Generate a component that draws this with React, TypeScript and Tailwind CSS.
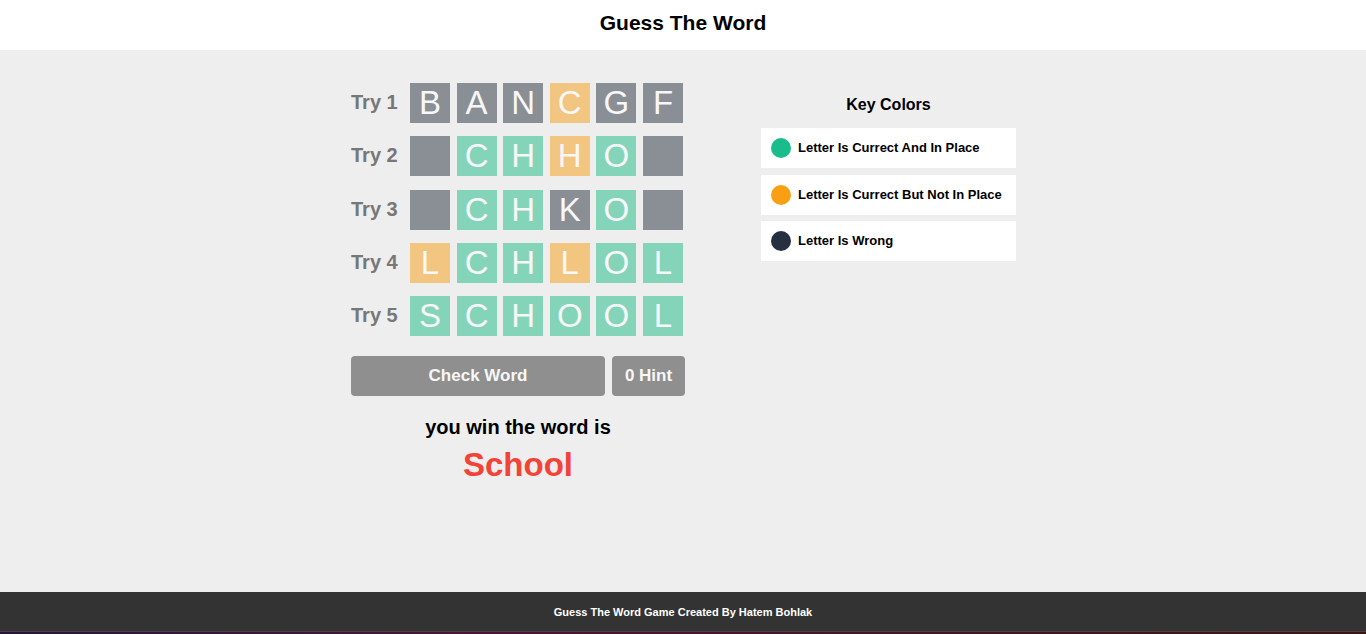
type Mark = "wrong" | "near" | "right";

const tone: Record<Mark, string> = {
  wrong: "bg-[#8a8e95]",
  near: "bg-[#f2c680]",
  right: "bg-[#84d4ba]",
};

const tries: { letters: string[]; marks: Mark[] }[] = [
  { letters: ["B", "A", "N", "C", "G", "F"], marks: ["wrong", "wrong", "wrong", "near", "wrong", "wrong"] },
  { letters: ["", "C", "H", "H", "O", ""], marks: ["wrong", "right", "right", "near", "right", "wrong"] },
  { letters: ["", "C", "H", "K", "O", ""], marks: ["wrong", "right", "right", "wrong", "right", "wrong"] },
  { letters: ["L", "C", "H", "L", "O", "L"], marks: ["near", "right", "right", "near", "right", "right"] },
  { letters: ["S", "C", "H", "O", "O", "L"], marks: ["right", "right", "right", "right", "right", "right"] },
];

const keys = [
  { color: "bg-[#1abc8b]", label: "Letter Is Currect And In Place" },
  { color: "bg-[#f99f14]", label: "Letter Is Currect But Not In Place" },
  { color: "bg-[#263040]", label: "Letter Is Wrong" },
];

export default function App() {
  return (
    <div className="flex min-h-screen flex-col bg-[#eeeeee] font-['Liberation_Sans',Arial,sans-serif] text-black">
      <header className="bg-white px-4 pt-2 pb-3 text-center">
        <h1 className="text-[21px] leading-[30px] font-bold">Guess The Word</h1>
      </header>

      <main className="mx-auto flex w-full max-w-[666px] flex-1 items-start justify-between pt-[33px] pl-px">
        <section className="w-[334px]">
          <div className="flex min-h-[253px] flex-col justify-between pr-0.5">
            {tries.map((row, r) => (
              <div key={r} className="flex items-center justify-between">
                <span className="pb-0.5 text-xl leading-6 font-bold text-[#777777]">Try {r + 1}</span>
                <div className="flex w-[273px] justify-between">
                  {row.letters.map((letter, i) => (
                    <input
                      key={i}
                      type="text"
                      maxLength={1}
                      disabled
                      defaultValue={letter}
                      aria-label={`Try ${r + 1}, letter ${i + 1}`}
                      className={`size-10 p-0 text-center text-[33px] leading-10 text-[#f7f7f7] ${tone[row.marks[i]]}`}
                    />
                  ))}
                </div>
              </div>
            ))}
          </div>

          <div className="mt-5 flex gap-[7px] text-[17px] leading-5 font-bold text-[#f7f7f7]">
            <button type="button" disabled className="h-10 flex-1 rounded bg-[#8f8f8f]">
              Check Word
            </button>
            <button type="button" disabled className="h-10 w-[73px] rounded bg-[#8f8f8f]">
              0 Hint
            </button>
          </div>

          <div className="mt-[19px] text-center font-bold" role="status">
            <p className="text-xl leading-6">you win the word is</p>
            <p className="mt-1.5 text-[33px] leading-10 text-[#f44336]">School</p>
          </div>
        </section>

        <aside className="mt-3 w-[255px]">
          <h2 className="text-center text-base leading-5 font-bold">Key Colors</h2>
          <ul className="mt-[13px] flex min-h-[133px] flex-col justify-between">
            {keys.map((key) => (
              <li key={key.label} className="flex h-10 items-center gap-[7px] bg-white pl-2.5 whitespace-nowrap">
                <span className={`size-5 shrink-0 rounded-full ${key.color}`} />
                <span className="text-[13px] leading-5 font-bold">{key.label}</span>
              </li>
            ))}
          </ul>
        </aside>
      </main>

      <footer className="bg-[#333333] text-center text-[11px] leading-10 font-bold text-white">
        Guess The Word Game Created By Hatem Bohlak
        <div className="-mt-px h-[3px] border-t border-[#4a4042] bg-linear-to-r from-[#22163a] via-[#4a1535] via-35% to-[#3c1414]" />
      </footer>
    </div>
  );
}
